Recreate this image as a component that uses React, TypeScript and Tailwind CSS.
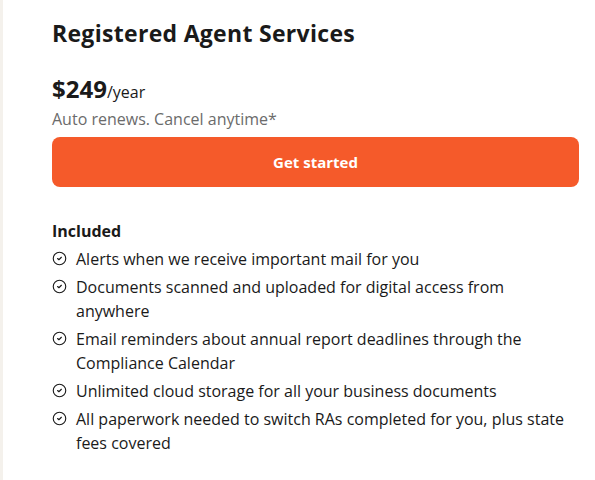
import { CircleCheck } from "lucide-react";

const items = [
  "Alerts when we receive important mail for you",
  "Documents scanned and uploaded for digital access from anywhere",
  "Email reminders about annual report deadlines through the Compliance Calendar",
  "Unlimited cloud storage for all your business documents",
  "All paperwork needed to switch RAs completed for you, plus state fees covered",
];

export default function App() {
  return (
    <div
      className="flex min-h-[480px] bg-white text-[#1a1a1a]"
      style={{ fontFamily: '"Open Sans", "Liberation Sans", sans-serif' }}
    >
      <div className="w-[3px] shrink-0 bg-[#f4f1ec]" />
      <main className="flex-1 pl-[49px] pr-[16px] pt-[18px]">
        <h1 className="text-[23px] font-bold leading-[30px] tracking-[0.3px]">
          Registered Agent Services
        </h1>
        <p className="mt-[26px] leading-[30px]">
          <span className="text-[24px] font-bold">$249</span>
          <span className="text-[16px]">/year</span>
        </p>
        <p className="text-[16px] leading-[24px] text-[#6b6b6b]">Auto renews. Cancel anytime*</p>
        <button className="mt-[6px] h-[50px] w-full rounded-lg bg-[#f55a2a] text-[15px] font-bold text-white">
          Get started
        </button>
        <h2 className="mt-[32px] text-[16px] font-bold leading-[24px]">Included</h2>
        <ul className="mt-[4px] flex flex-col gap-[4px]">
          {items.map((t) => (
            <li key={t} className="flex gap-[9px] text-[16px] leading-[24px]">
              <CircleCheck className="mt-[4px] h-[15px] w-[15px] shrink-0" strokeWidth={1.8} />
              <span>{t}</span>
            </li>
          ))}
        </ul>
      </main>
    </div>
  );
}
